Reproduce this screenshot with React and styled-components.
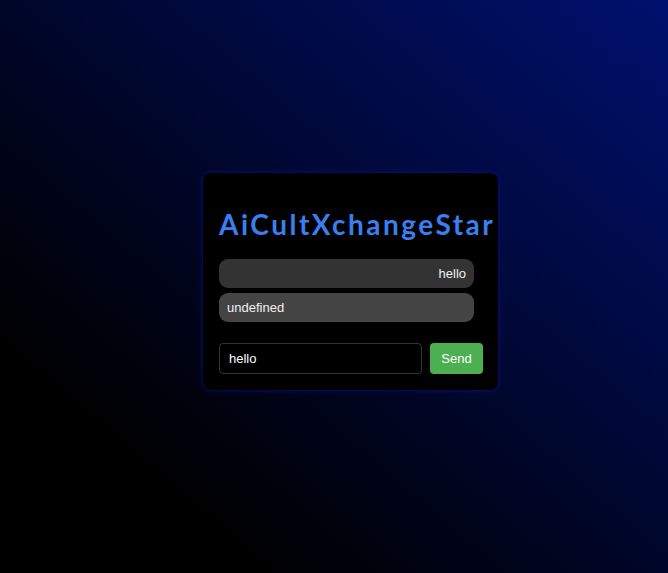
import React from "react";
import styled, { createGlobalStyle } from "styled-components";

const Global = createGlobalStyle`
  html, body { margin: 0; padding: 0; height: 100%; }
  body {
    background: linear-gradient(to top right, #000000 0%, #000000 20%, #00106e 100%);
    font-family: "Liberation Sans", Arial, sans-serif;
    color: #fff;
  }
`;

const Page = styled.div`
  min-height: 573px;
  box-sizing: border-box;
  display: flex;
  align-items: center;
  justify-content: center;
  padding-left: 33px;
  padding-bottom: 10px;
`;

const Card = styled.div`
  width: 295px;
  box-sizing: border-box;
  background: #000;
  border-radius: 8px;
  box-shadow: 0 0 4px 1px rgba(10, 20, 140, 0.7);
  padding: 34px 15px 16px 16px;
  display: flex;
  flex-direction: column;
`;

const Title = styled.h1`
  margin: 0 0 18px 0;
  font-family: Lato, "Open Sans", sans-serif;
  font-weight: 700;
  font-size: 28px;
  line-height: 34px;
  letter-spacing: 2.5px;
  color: #3a7ff0;
  white-space: nowrap;
`;

const Messages = styled.div`
  width: 255px;
  display: flex;
  flex-direction: column;
  gap: 5px;
  margin-bottom: 21px;
`;

const Bubble = styled.div`
  height: 29px;
  box-sizing: border-box;
  padding: 0 8px;
  border-radius: 9px;
  background: ${(p) => (p.$mine ? "#333333" : "#444444")};
  display: flex;
  align-items: center;
  justify-content: ${(p) => (p.$mine ? "flex-end" : "flex-start")};
  font-size: 13px;
  color: #f0f0f0;
`;

const InputRow = styled.div`
  display: flex;
  gap: 8px;
  align-items: stretch;
`;

const Input = styled.input`
  width: 203px;
  height: 31px;
  box-sizing: border-box;
  background: #000;
  border: 1px solid #333;
  border-radius: 4px;
  padding: 0 9px;
  font-family: "Liberation Sans", Arial, sans-serif;
  font-size: 13px;
  color: #fff;
  outline: none;
`;

const Button = styled.button`
  width: 53px;
  height: 31px;
  border: none;
  border-radius: 4px;
  background: #4caf50;
  color: #fff;
  font-family: "Liberation Sans", Arial, sans-serif;
  font-size: 13px;
  cursor: pointer;
`;

export default function App() {
  return (
    <>
      <Global />
      <Page>
        <Card>
          <Title>AiCultXchangeStar</Title>
          <Messages>
            <Bubble $mine>hello</Bubble>
            <Bubble>undefined</Bubble>
          </Messages>
          <InputRow>
            <Input defaultValue="hello" />
            <Button>Send</Button>
          </InputRow>
        </Card>
      </Page>
    </>
  );
}
